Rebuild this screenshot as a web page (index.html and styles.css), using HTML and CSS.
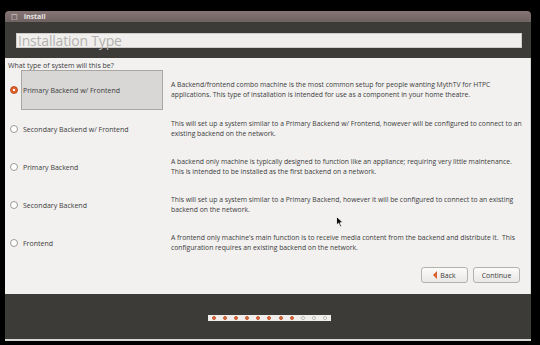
FILE: index.html
```html
<!DOCTYPE html>
<html lang="en">
<head>
  <meta charset="UTF-8" />
  <title>Install</title>
  <link rel="stylesheet" href="styles.css">
</head>
<body>

<div class="window">
  <div class="titlebar">
    <span class="close">&#9633;</span>
    <span class="title">Install</span>
  </div>

  <div class="header">
    <div class="page-title">Installation Type</div>
  </div>

  <div class="content">
    <div class="question">What type of system will this be?</div>

    <div class="options">
      <div class="option selected">
        <div class="choice"><span class="radio on"></span><span class="label">Primary Backend w/ Frontend</span></div>
        <div class="desc">A Backend/frontend combo machine is the most common setup for people wanting MythTV for HTPC<br>applications. This type of installation is intended for use as a component in your home theatre.</div>
      </div>
      <div class="option">
        <div class="choice"><span class="radio"></span><span class="label">Secondary Backend w/ Frontend</span></div>
        <div class="desc">This will set up a system similar to a Primary Backend w/ Frontend, however will be configured to connect to an<br>existing backend on the network.</div>
      </div>
      <div class="option">
        <div class="choice"><span class="radio"></span><span class="label">Primary Backend</span></div>
        <div class="desc">A backend only machine is typically designed to function like an appliance; requiring very little maintenance.<br>This is intended to be installed as the first backend on a network.</div>
      </div>
      <div class="option">
        <div class="choice"><span class="radio"></span><span class="label">Secondary Backend</span></div>
        <div class="desc">This will set up a system similar to a Primary Backend, however it will be configured to connect to an existing<br>backend on the network.</div>
      </div>
      <div class="option">
        <div class="choice"><span class="radio"></span><span class="label">Frontend</span></div>
        <div class="desc">A frontend only machine's main function is to receive media content from the backend and distribute it.&nbsp; This<br>configuration requires an existing backend on the network.</div>
      </div>
    </div>

    <div class="buttons">
      <button class="btn back"><span class="arrow"></span>Back</button>
      <button class="btn">Continue</button>
    </div>

    <svg class="cursor" width="8" height="12" viewBox="0 0 8 12">
      <path d="M0.5 0.5 L0.5 9 L2.6 7.2 L4.2 10.8 L5.6 10.2 L4 6.8 L7 6.6 Z" fill="#111" stroke="#fff" stroke-width="0.8"/>
    </svg>
  </div>

  <div class="footer">
    <div class="progress">
      <span class="dot done"></span><span class="dot done"></span><span class="dot done"></span><span class="dot done"></span>
      <span class="dot done"></span><span class="dot done"></span><span class="dot done"></span><span class="dot done"></span>
      <span class="dot"></span><span class="dot"></span><span class="dot"></span>
    </div>
  </div>
</div>

</body>
</html>
```

FILE: styles.css
```css
body {
  margin: 0;
  background: #000;
  font-family: "Open Sans", "DejaVu Sans", sans-serif;
  height: 345px;
  overflow: hidden;
}
.window {
  margin: 11px 0 0 5px;
  width: 526px;
}
.titlebar {
  height: 11px;
  background: linear-gradient(#877575, #6f6262);
  border-radius: 4px 4px 0 0;
  display: flex;
  align-items: center;
  padding-left: 6px;
  color: #e8e4e2;
  font-size: 7px;
  font-weight: bold;
}
.close {
  font-size: 7px;
  margin-right: 6px;
}
.header {
  background: #3c3b37;
  height: 36px;
  padding: 11px 9px 0 11px;
  box-sizing: border-box;
}
.page-title {
  height: 15px;
  background: #f0efed;
  border: 1px solid #cfcdca;
  box-sizing: border-box;
  color: #b3b1ae;
  font-size: 14px;
  line-height: 13px;
  padding-left: 1px;
  letter-spacing: -0.2px;
}
.content {
  background: #f2f1f0;
  height: 236px;
  position: relative;
  color: #3c3c3c;
  font-size: 7px;
  border-right: 1px solid #d6d4d2;
  box-sizing: border-box;
}
.question {
  padding: 4px 0 0 3px;
  height: 8px;
  line-height: 8px;
}
.options {
  display: flex;
  flex-direction: column;
}
.option {
  display: flex;
  align-items: center;
  height: 38px;
}
.option:first-child {
  height: 40px;
}
.choice {
  width: 166px;
  flex: none;
  display: flex;
  align-items: center;
  padding-left: 5px;
  box-sizing: border-box;
  height: 100%;
}
.selected .choice .label {
  background: #d8d7d5;
  border: 1px solid #a9a7a4;
  height: 40px;
  width: 142px;
  box-sizing: border-box;
  display: flex;
  align-items: center;
  margin-left: -1px;
  padding-left: 1px;
}
.label {
  padding-left: 1px;
}
.radio {
  width: 6px;
  height: 6px;
  border-radius: 50%;
  border: 1px solid #9c9a97;
  background: #fff;
  margin-right: 4px;
  flex: none;
}
.radio.on {
  background: radial-gradient(circle, #fff 0 1.3px, #e0602a 1.6px);
  border-color: #c04a1a;
}
.desc {
  flex: 1;
  white-space: nowrap;
  line-height: 10.5px;
  font-size: 6.8px;
}
.buttons {
  position: absolute;
  right: 10px;
  top: 209px;
  display: flex;
  gap: 5px;
}
.btn {
  width: 47px;
  height: 16px;
  border: 1px solid #b4b2af;
  border-radius: 3px;
  background: linear-gradient(#fbfbfa, #e9e8e6);
  font-family: inherit;
  font-size: 7px;
  color: #3c3c3c;
  padding: 0;
  display: flex;
  align-items: center;
  justify-content: center;
}
.arrow {
  width: 0;
  height: 0;
  border-top: 4px solid transparent;
  border-bottom: 4px solid transparent;
  border-right: 4px solid #d9602c;
  margin-right: 3px;
}
.cursor {
  position: absolute;
  left: 331px;
  top: 158px;
}
.footer {
  background: #3c3b37;
  height: 43px;
  border-bottom: 2px solid #d8d7d4;
  display: flex;
  justify-content: center;
  align-items: center;
  padding-top: 2px;
  box-sizing: content-box;
}
.progress {
  background: #efeeec;
  height: 6px;
  width: 123px;
  display: flex;
  align-items: center;
  justify-content: space-around;
  margin-left: 3px;
}
.dot {
  width: 4px;
  height: 4px;
  border-radius: 50%;
  background: #fff;
  border: 0.5px solid #b9b7b4;
  box-sizing: border-box;
}
.dot.done {
  background: #df6d3f;
  border-color: #c25a30;
}
```
